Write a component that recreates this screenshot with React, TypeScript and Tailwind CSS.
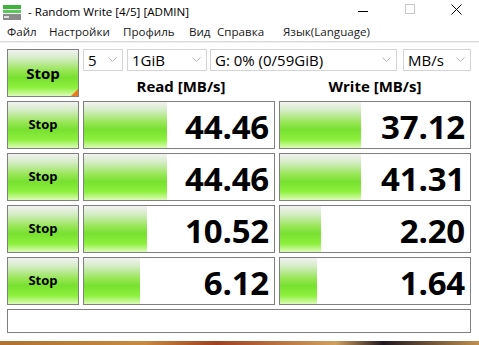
import React from "react";

const font = { fontFamily: '"Open Sans", "Noto Sans", sans-serif' };

const grad =
  "bg-[linear-gradient(to_bottom,#f2f2f2_0%,#d4ecc4_18%,#96e654_45%,#78e030_60%,#8ef03e_82%,#dcfcb8_100%)]";

function Chevron() {
  return (
    <svg width="9" height="6" viewBox="0 0 9 6" className="shrink-0">
      <path d="M0.5 0.5 L4.5 4.5 L8.5 0.5" fill="none" stroke="#b4b4b4" strokeWidth="1" />
    </svg>
  );
}

function Select({ w, label }: { w: string; label: string }) {
  return (
    <div className={`${w} h-[22px] border border-[#d4d4d4] bg-white flex items-center justify-between pl-[4px] pr-[5px] text-[15px] text-black leading-none`}>
      <span>{label}</span>
      <Chevron />
    </div>
  );
}

function Bar({ value, pct }: { value: string; pct: number }) {
  return (
    <div className="relative h-[48px] border border-[#808080] bg-white overflow-hidden">
      <div className={`absolute left-0 top-0 bottom-0 ${grad}`} style={{ width: `${pct}px` }} />
      <div className="relative h-full flex items-center justify-end pr-[5px] pt-[3px] text-[33px] font-bold text-black leading-none tracking-[-0.2px]">
        {value}
      </div>
    </div>
  );
}

function StopBtn() {
  return (
    <div className={`h-[48px] border border-[#808080] ${grad} flex items-center justify-center text-[13px] font-bold text-black`}>
      Stop
    </div>
  );
}

const rows = [
  { r: "44.46", rw: 83, w: "37.12", ww: 81 },
  { r: "44.46", rw: 83, w: "41.31", ww: 81 },
  { r: "10.52", rw: 63, w: "2.20", ww: 41 },
  { r: "6.12", rw: 56, w: "1.64", ww: 37 },
];

export default function App() {
  return (
    <div className="w-[479px] h-[345px] bg-white overflow-hidden flex flex-col text-black" style={font}>
      {/* title bar */}
      <div className="h-[22px] flex items-center relative">
        <svg width="18" height="15" viewBox="0 0 18 15" className="ml-[3px] mt-[2px]">
          <rect x="0" y="0" width="18" height="4" fill="#3cb43c" />
          <rect x="0" y="5" width="18" height="3" fill="#58c858" />
          <rect x="0" y="9" width="18" height="6" fill="#8a8a8a" />
          <rect x="1" y="11" width="5" height="2" fill="#e0e0e0" />
        </svg>
        <span className="ml-[7px] text-[11.6px] leading-none mt-[1px]">- Random Write [4/5] [ADMIN]</span>
        <div className="absolute left-[358px] top-[11px] w-[10px] h-[1px] bg-black" />
        <div className="absolute left-[405px] top-[4px] w-[10px] h-[10px] border border-[#c8c8c8]" />
        <svg width="11" height="11" viewBox="0 0 11 11" className="absolute left-[451px] top-[4px]">
          <path d="M0.5 0.5 L10.5 10.5 M10.5 0.5 L0.5 10.5" stroke="#000" strokeWidth="1" />
        </svg>
      </div>
      {/* menu */}
      <div className="h-[19px] flex items-center text-[11.6px] leading-none text-[#1a1a1a] pl-[7px]">
        <span className="w-[42px]">Файл</span>
        <span className="w-[74px]">Настройки</span>
        <span className="w-[66px]">Профиль</span>
        <span className="w-[28px]">Вид</span>
        <span className="w-[66px]">Справка</span>
        <span>Язык(Language)</span>
      </div>
      <div className="h-[2px] bg-[#d9d9d9] border-b border-[#f0f0f0]" />
      <div className="h-[6px]" />
      {/* top controls */}
      <div className="flex pl-[7px] gap-[4px]">
        <div className={`relative w-[72px] h-[48px] border border-[#808080] ${grad} flex items-center justify-center text-[15px] font-bold`}>
          Stop
          <div className="absolute right-0 bottom-0 w-0 h-0 border-l-[7px] border-l-transparent border-b-[7px] border-b-[#f07818]" />
        </div>
        <div className="flex flex-col">
          <div className="flex items-center">
            <Select w="w-[40px]" label="5" />
            <div className="w-[4px]" />
            <Select w="w-[80px]" label="1GiB" />
            <div className="w-[3px]" />
            <Select w="w-[187px]" label="G: 0% (0/59GiB)" />
            <div className="w-[6px]" />
            <Select w="w-[68px]" label="MB/s" />
          </div>
          <div className="flex h-[26px] items-center pt-[5px]">
            <div className="w-[196px] text-center text-[15px] font-bold leading-none">Read [MB/s]</div>
            <div className="w-[192px] text-center text-[15px] font-bold leading-none">Write [MB/s]</div>
          </div>
        </div>
      </div>
      {/* rows */}
      <div className="grid grid-cols-[72px_192px_192px] gap-[4px] pl-[7px] mt-[4px]">
        {rows.map((row, i) => (
          <React.Fragment key={i}>
            <StopBtn />
            <Bar value={row.r} pct={row.rw} />
            <Bar value={row.w} pct={row.ww} />
          </React.Fragment>
        ))}
      </div>
      <div className="ml-[7px] mt-[4px] w-[464px] h-[24px] border border-[#808080] bg-white" />
      <div className="flex-1" />
      <div className="h-[4px] bg-[linear-gradient(to_right,#b07030,#c88a40_30%,#a04020_45%,#d0a060_70%,#201820_80%,#c09050)]" />
    </div>
  );
}
